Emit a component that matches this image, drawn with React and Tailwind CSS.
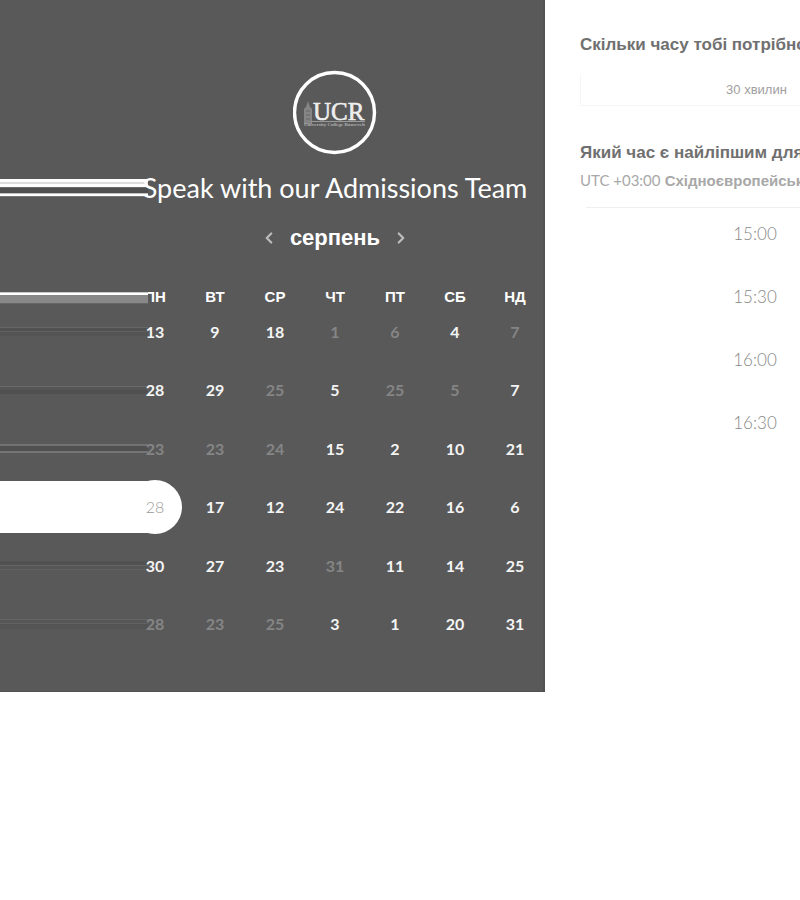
import { ChevronLeft, ChevronRight } from "lucide-react";

const weekdays = ["ПН", "ВТ", "СР", "ЧТ", "ПТ", "СБ", "НД"];

// Days marked "-" are unavailable, "*" is the selected one.
const weeks = [
  ["13", "9", "18", "-1", "-6", "4", "-7"],
  ["28", "29", "-25", "5", "-25", "-5", "7"],
  ["-23", "-23", "-24", "15", "2", "10", "21"],
  ["*28", "17", "12", "24", "22", "16", "6"],
  ["30", "27", "23", "-31", "11", "14", "25"],
  ["-28", "-23", "-25", "3", "1", "20", "31"],
];

const titleBands = [
  "h-[3px] bg-white",
  "h-[2px] bg-[#dcdcdc]",
  "h-[3px] bg-white",
  "h-[1px] bg-[#6a6a6a]",
  "h-[5px] bg-[#505050]",
  "h-[1px] bg-[#c0c0c0]",
  "h-[2px] bg-white",
  "h-[1px] bg-[#777777]",
];
const headBands = [
  "h-[1px] bg-[#c8c8c8]",
  "h-[2px] bg-white",
  "h-[8px] bg-[#888888]",
  "h-[1px] bg-[#666666]",
];
const weekBands = [
  ["h-[1px] bg-[#666666]", "h-[3px] bg-[#515151]", "h-[1px] bg-[#606060]", "h-[4px] bg-[#545454]"],
  ["h-[1px] bg-[#6a6a6a]", "h-[3px] bg-[#565656]", "h-[4px] bg-[#505050]"],
  ["h-[2px] bg-[#727272]", "h-[5px] bg-[#505050]", "h-[2px] bg-[#757575]"],
  ["h-[52px] bg-white"],
  ["h-[4px] bg-[#515151]", "h-[1px] bg-[#656565]", "h-[3px] bg-[#565656]", "h-[1px] bg-[#606060]"],
  ["h-[1px] bg-[#656565]", "h-[3px] bg-[#565656]", "h-[1px] bg-[#626262]", "h-[5px] bg-[#545454]"],
];

const times = ["15:00", "15:30", "16:00", "16:30"];

function Bands({ bands }) {
  return (
    <div className="-mr-[23px]" aria-hidden="true">
      {bands.map((band, i) => (
        <div key={i} className={band} />
      ))}
    </div>
  );
}

function Logo() {
  return (
    <svg width="84" height="86" viewBox="0 0 84 86" role="img" aria-label="UCR">
      <circle cx="41.500" cy="42.500" r="40" fill="none" stroke="#fff" strokeWidth="3.400" />
      <path d="M11 54V39l2-2 2-6 2 6 2 2v15z" fill="#858585" />
      <path d="M13 41h4M13 45h4M13 49h4" stroke="#666" strokeWidth="1" />
      <text
        x="20"
        y="50"
        fontSize="25"
        fill="#eeeeee"
        stroke="#eeeeee"
        strokeWidth="0.600"
        fontFamily="Liberation Serif, serif"
      >
        UCR
      </text>
      <path d="M18 51.500H72" stroke="#9a9a9a" strokeWidth="1" />
      <text
        x="41.500"
        y="56"
        fontSize="5"
        fontWeight="bold"
        textAnchor="middle"
        fill="#b0b0b0"
        fontFamily="Liberation Serif, serif"
      >
        University College Roosevelt
      </text>
    </svg>
  );
}

function Day({ value }) {
  const selected = value.startsWith("*");
  const disabled = value.startsWith("-");
  const tone = selected
    ? "bg-white font-light text-[#999999]"
    : disabled
      ? "font-bold text-[#858585]"
      : "font-bold text-[#f4f4f4]";
  return (
    <button
      type="button"
      disabled={disabled}
      aria-pressed={selected}
      className={`relative mx-auto block size-[54px] rounded-full text-base ${tone}`}
    >
      {value.replace(/[-*]/, "")}
    </button>
  );
}

function Calendar() {
  return (
    <section className="overflow-hidden border-r-2 border-b border-[#525252] bg-[#595959] pt-[70px] pb-[38px] font-[Lato,sans-serif] text-white">
      <div className="-mr-[2px]">
        <div className="ml-auto flex w-[420px] justify-center">
          <Logo />
        </div>
        <div className="mt-4 flex items-center">
          <div className="flex-1">
            <Bands bands={titleBands} />
          </div>
          <h1 className="w-[420px] text-center text-[27px] leading-8 whitespace-nowrap">
            Speak with our Admissions Team
          </h1>
        </div>
        <div className="mt-[18px] ml-auto flex w-[420px] items-center justify-center gap-3 text-[#bbbbbb]">
          <button type="button" aria-label="Попередній місяць">
            <ChevronLeft size={18} strokeWidth={3} />
          </button>
          <h2 className="font-['Liberation_Sans',sans-serif] text-[22px] leading-8 font-bold text-white">серпень</h2>
          <button type="button" aria-label="Наступний місяць">
            <ChevronRight size={18} strokeWidth={3} />
          </button>
        </div>
        <table className="mt-[38px] w-full table-fixed border-collapse">
          <thead>
            <tr>
              <td className="p-0">
                <div className="relative z-10 h-[10px]">
                  <Bands bands={headBands} />
                </div>
              </td>
              {weekdays.map((day) => (
                <th
                  key={day}
                  scope="col"
                  className="w-[60px] p-0 font-['Liberation_Sans',sans-serif] text-[15px] leading-[10px] font-bold"
                >
                  {day}
                </th>
              ))}
            </tr>
          </thead>
          <tbody>
            {weeks.map((week, row) => (
              <tr key={row} className="h-[59px] even:h-[58px]">
                <td className="p-0">
                  <Bands bands={weekBands[row]} />
                </td>
                {week.map((value, col) => (
                  <td key={col} className="p-0">
                    <Day value={value} />
                  </td>
                ))}
              </tr>
            ))}
          </tbody>
        </table>
      </div>
    </section>
  );
}

function Booking() {
  return (
    <section className="overflow-hidden pt-[33px] pl-[35px] font-['Liberation_Sans',sans-serif]">
      <div className="w-[352px]">
        <h2 className="text-[17px] leading-6 font-bold whitespace-nowrap text-[#707070]">
          Скільки часу тобі потрібно
        </h2>
        <button
          type="button"
          className="mt-[17px] block h-8 w-full border-b border-l border-[#f6f6f6] text-[13px] text-[#a0a0a0]"
        >
          30 хвилин
        </button>
        <h2 className="mt-[35px] text-[17px] leading-6 font-bold whitespace-nowrap text-[#707070]">
          Який час є найліпшим для
        </h2>
        <p className="mt-[3px] text-[15px] leading-6 font-bold whitespace-nowrap text-[#a8a8a8]">
          <span className="font-[Lato,sans-serif] font-normal">UTC +03:00</span> Східноєвропейський
        </p>
        <ul className="mt-[14px] ml-1.5 border-t border-[#eeeeee] pt-2.5">
          {times.map((time) => (
            <li key={time} className="mb-[31px]">
              <button
                type="button"
                className="block h-8 w-full pr-2 font-[Lato,sans-serif] text-[17px] font-light text-[#888888]"
              >
                {time}
              </button>
            </li>
          ))}
        </ul>
      </div>
    </section>
  );
}

export default function App() {
  return (
    <main className="grid min-h-screen grid-cols-[minmax(0,109fr)_minmax(0,51fr)] items-start bg-white">
      <Calendar />
      <Booking />
    </main>
  );
}
